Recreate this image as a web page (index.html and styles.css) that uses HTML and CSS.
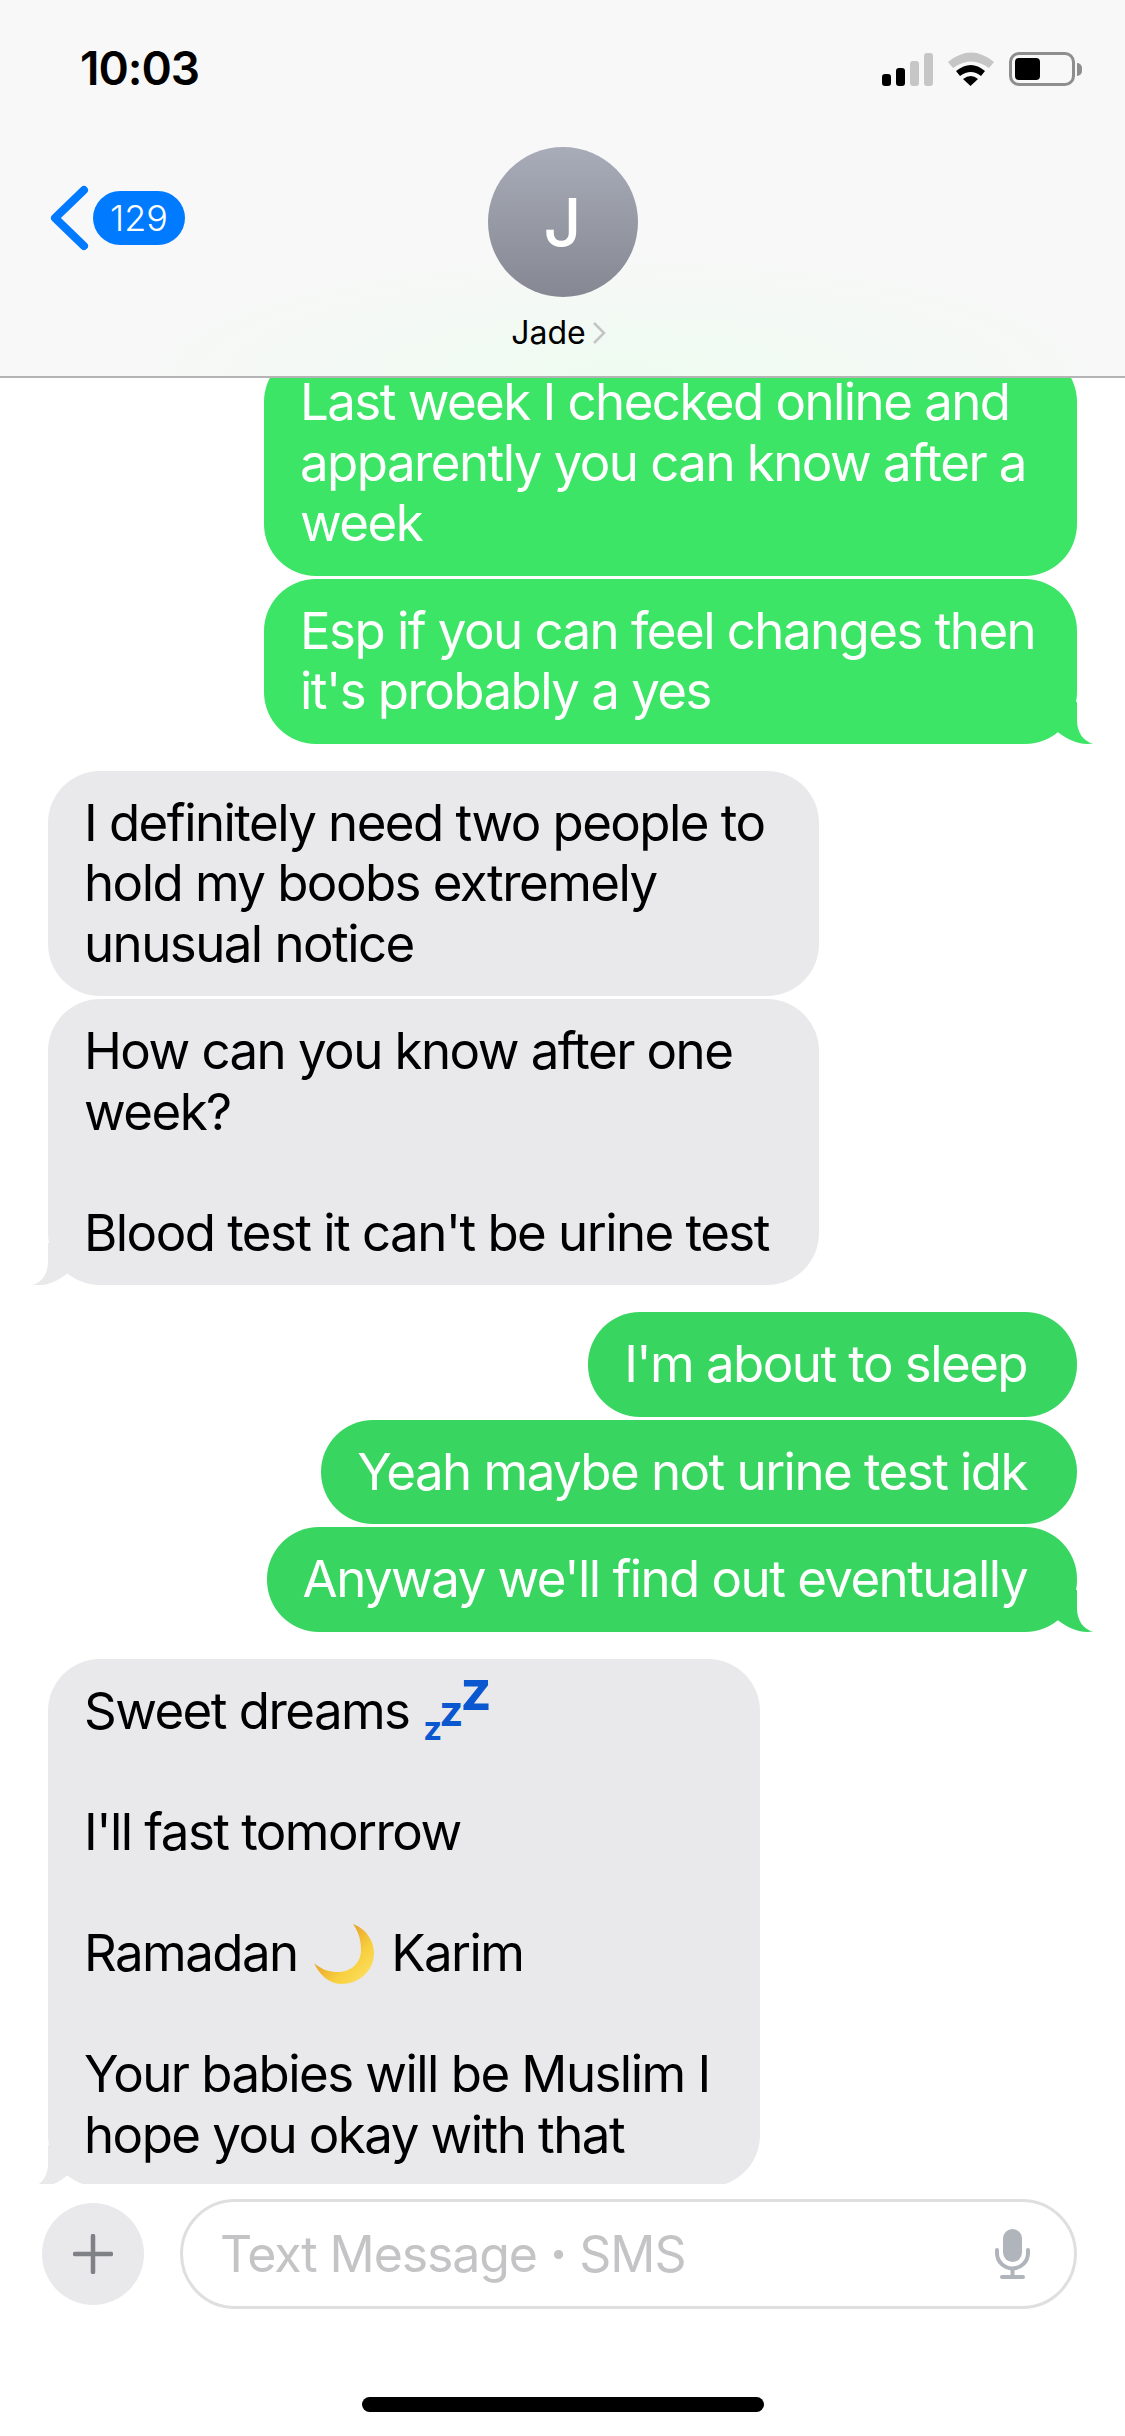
FILE: index.html
```html
<!DOCTYPE html>
<html lang="en">
<head>
    <meta charset="UTF-8">
    <meta name="viewport" content="width=device-width, initial-scale=1.0">
    <title>Jade</title>
    <link rel="stylesheet" href="styles.css">
</head>
<body>
    <div class="phone">
        <!-- Header -->
        <header class="top-bar">
            <div class="status-bar">
                <span class="clock">10:03</span>
                <div class="status-icons">
                    <svg width="51" height="33" viewBox="0 0 51 33">
                        <rect x="0" y="21" width="9" height="12" rx="3" fill="#000"/>
                        <rect x="14" y="15" width="9" height="18" rx="3" fill="#000"/>
                        <rect x="28" y="8" width="9" height="25" rx="3" fill="#c6c6c6"/>
                        <rect x="42" y="0" width="9" height="33" rx="3" fill="#c6c6c6"/>
                    </svg>
                    <svg width="46" height="34" viewBox="0 0 46 34">
                        <path d="M0 10 Q23 -9 46 10 L41 16 Q23 3 5 16 Z" fill="#c6c6c6"/>
                        <path d="M8 19 Q23 7 37 19 L33 24 Q23 16 12 24 Z" fill="#000"/>
                        <path d="M15 27 Q23 21 30 27 L22.5 34 Z" fill="#000"/>
                    </svg>
                    <div class="battery">
                        <div class="battery-body"><div class="battery-level"></div></div>
                        <div class="battery-tip"></div>
                    </div>
                </div>
            </div>
            <div class="nav-bar">
                <div class="back">
                    <svg width="40" height="66" viewBox="0 0 40 66">
                        <path d="M34 5 L5 33 L34 61" fill="none" stroke="#007aff" stroke-width="8" stroke-linecap="round" stroke-linejoin="round"/>
                    </svg>
                    <span class="back-count">129</span>
                </div>
                <div class="contact">
                    <div class="avatar">J</div>
                    <div class="contact-name">
                        <span>Jade</span>
                        <svg width="14" height="24" viewBox="0 0 14 24">
                            <path d="M2 2 L12 12 L2 22" fill="none" stroke="#c4c4c6" stroke-width="2.5"/>
                        </svg>
                    </div>
                </div>
            </div>
        </header>

        <!-- Messages -->
        <main class="thread">
            <div class="group group-out group-a">
                <div class="bubble out">Last week I checked online and<br>apparently you can know after a<br>week</div>
                <div class="bubble out tail">Esp if you can feel changes then<br>it's probably a yes</div>
            </div>
            <div class="group group-in group-c">
                <div class="bubble in">I definitely need two people to<br>hold my boobs extremely<br>unusual notice</div>
                <div class="bubble in tail">How can you know after one<br>week?<br><br>Blood test it can't be urine test</div>
            </div>
            <div class="group group-out group-b">
                <div class="bubble out">I'm about to sleep</div>
                <div class="bubble out">Yeah maybe not urine test idk</div>
                <div class="bubble out tail">Anyway we'll find out eventually</div>
            </div>
            <div class="group group-in group-d">
                <div class="bubble in tail">Sweet dreams <span class="zzz"><span class="z1">z</span><span class="z2">z</span><span class="z3">z</span></span><br><br>I'll fast tomorrow<br><br>Ramadan <svg class="moon" width="60" height="60" viewBox="0 0 60 60"><defs><linearGradient id="moonfill" x1="0.35" y1="0.35" x2="1" y2="1"><stop offset="0" stop-color="#e9a52c"/><stop offset="0.45" stop-color="#f8cf3e"/><stop offset="1" stop-color="#fde56c"/></linearGradient></defs><path d="M39 0 C55 6 60 20 60 29 C60 47 45 60 27 60 C15 60 5 50 0 39 C8 46 16 48 24 48 C38 48 47 38 47 26 C47 15 44 7 39 0 Z" fill="url(#moonfill)"/></svg> Karim<br><br>Your babies will be Muslim I<br>hope you okay with that</div>
            </div>
        </main>

        <!-- Input -->
        <div class="compose">
            <div class="plus-btn">
                <svg width="40" height="40" viewBox="0 0 40 40">
                    <path d="M20 2 V38 M2 20 H38" stroke="#808187" stroke-width="4.5" stroke-linecap="round"/>
                </svg>
            </div>
            <div class="input-box">
                <span class="placeholder">Text Message <span class="dot">·</span> SMS</span>
                <svg width="36" height="50" viewBox="0 0 36 50">
                    <rect x="8" y="0" width="19" height="33" rx="9.5" fill="#b0b4bb"/>
                    <path d="M2 21 V24 A15.5 15.5 0 0 0 33 24 V21" fill="none" stroke="#b0b4bb" stroke-width="4" stroke-linecap="round"/>
                    <path d="M17.5 39 V47" stroke="#b0b4bb" stroke-width="4"/>
                    <rect x="5" y="46" width="25" height="4" rx="2" fill="#b0b4bb"/>
                </svg>
            </div>
        </div>

        <div class="home-area">
            <div class="home-indicator"></div>
        </div>
    </div>
</body>
</html>
```
FILE: styles.css
```css
/* General Reset */
* {
    margin: 0;
    padding: 0;
    box-sizing: border-box;
}

body {
    font-family: Inter, "Liberation Sans", sans-serif;
    background: #ffffff;
    color: #000000;
    overflow: hidden;
}

.phone {
    width: 1125px;
    height: 2436px;
    display: flex;
    flex-direction: column;
    overflow: hidden;
}

/* Header */
.top-bar {
    height: 378px;
    flex-shrink: 0;
    background: radial-gradient(ellipse 520px 130px at 620px 100%, #eefbf0, rgba(248, 248, 248, 0)), #f8f8f8;
    border-bottom: 2px solid #b4b4b4;
    display: flex;
    flex-direction: column;
}

.status-bar {
    height: 132px;
    padding: 37px 43px 0 80px;
    display: flex;
    justify-content: space-between;
    align-items: flex-start;
}

.clock {
    font-size: 46px;
    font-weight: 600;
    line-height: 62px;
    letter-spacing: -1px;
}

.status-icons {
    display: flex;
    align-items: center;
    gap: 15px;
    margin-top: 15px;
}

.battery {
    display: flex;
    align-items: center;
    gap: 2px;
}

.battery-body {
    width: 66px;
    height: 34px;
    border: 3px solid #8e8e8e;
    border-radius: 10px;
    padding: 3px;
}

.battery-level {
    width: 25px;
    height: 100%;
    background: #000000;
    border-radius: 4px;
}

.battery-tip {
    width: 5px;
    height: 13px;
    background: #8e8e8e;
    border-radius: 0 5px 5px 0;
}

.nav-bar {
    flex: 1;
    position: relative;
    display: flex;
    justify-content: center;
}

.back {
    position: absolute;
    left: 50px;
    top: 53px;
    display: flex;
    align-items: center;
    gap: 3px;
}

.back-count {
    background: #007aff;
    color: #ffffff;
    font-size: 36px;
    font-weight: 300;
    line-height: 54px;
    height: 54px;
    width: 92px;
    text-align: center;
    border-radius: 27px;
}

.contact {
    display: flex;
    flex-direction: column;
    align-items: center;
    padding-top: 15px;
}

.avatar {
    width: 150px;
    height: 150px;
    border-radius: 50%;
    background: linear-gradient(180deg, #a8acb8, #858892);
    color: #ffffff;
    font-size: 66px;
    font-weight: 500;
    line-height: 150px;
    text-align: center;
}

.contact-name {
    display: flex;
    align-items: center;
    gap: 6px;
    margin-top: 16px;
    margin-left: -8px;
    font-size: 32px;
    line-height: 40px;
}

/* Messages */
.thread {
    flex: 1;
    min-height: 0;
    overflow: hidden;
    display: flex;
    flex-direction: column;
    justify-content: flex-end;
    gap: 27px;
    padding: 0 48px;
}

.group {
    display: flex;
    flex-direction: column;
    gap: 3px;
    flex-shrink: 0;
}

.group-out {
    align-self: flex-end;
}

.group-in {
    align-self: flex-start;
}

.group-a {
    width: 813px;
}

.group-c {
    width: 771px;
}

.group-d {
    width: 712px;
    margin-bottom: -3px;
}

.group-b {
    align-items: flex-end;
}

.bubble {
    position: relative;
    font-size: 51px;
    letter-spacing: -1.55px;
    line-height: 60.5px;
    padding: 22px 37px 22px 36px;
    border-radius: 52px;
    white-space: nowrap;
}

.bubble.out {
    color: #ffffff;
}

.group-a .bubble.out {
    background: #3ce566;
}

.group-b .bubble.out {
    background: #38d660;
    padding-right: 50px;
}

.bubble.in {
    background: #e9e9eb;
}

/* bubble tails */
.bubble.tail::after {
    content: '';
    position: absolute;
    bottom: 0;
    width: 60px;
    height: 42px;
    background: inherit;
}

.bubble.out.tail::after {
    right: -16px;
    clip-path: path("M44 0 L44 19 C44 30 50 40 60 42 C46 44 34 38 24 30 L22 0 Z");
}

.bubble.in.tail::after {
    left: -16px;
    clip-path: path("M16 0 L16 19 C16 30 10 40 0 42 C14 44 26 38 36 30 L38 0 Z");
}

/* sleeping emoji */
.zzz {
    color: #0a57d0;
    font-weight: 700;
    line-height: 0;
    letter-spacing: -3px;
    margin-left: 1px;
}

.zzz span {
    display: inline-block;
}

.z1 {
    font-size: 33px;
    transform: translateY(11px);
}

.z2 {
    font-size: 42px;
    transform: translateY(-3px);
}

.z3 {
    font-size: 55px;
    transform: translateY(-19px);
}

.moon {
    vertical-align: -13px;
    margin: -20px 4px 0;
}

/* Input */
.compose {
    flex-shrink: 0;
    display: flex;
    align-items: center;
    gap: 36px;
    padding: 15px 48px 0 42px;
}

.plus-btn {
    width: 102px;
    height: 102px;
    border-radius: 50%;
    background: #e9e9eb;
    display: flex;
    align-items: center;
    justify-content: center;
}

.input-box {
    flex: 1;
    height: 110px;
    border: 3px solid #dfdfdf;
    border-radius: 55px;
    display: flex;
    align-items: center;
    justify-content: space-between;
    padding: 0 43px 0 37px;
}

.placeholder {
    font-size: 50px;
    letter-spacing: -1.1px;
    color: #c4c4c6;
}

.dot {
    font-weight: 800;
}

.home-area {
    flex-shrink: 0;
    height: 127px;
    display: flex;
    justify-content: center;
    padding-top: 88px;
}

.home-indicator {
    width: 402px;
    height: 15px;
    background: #000000;
    border-radius: 8px;
}
```
